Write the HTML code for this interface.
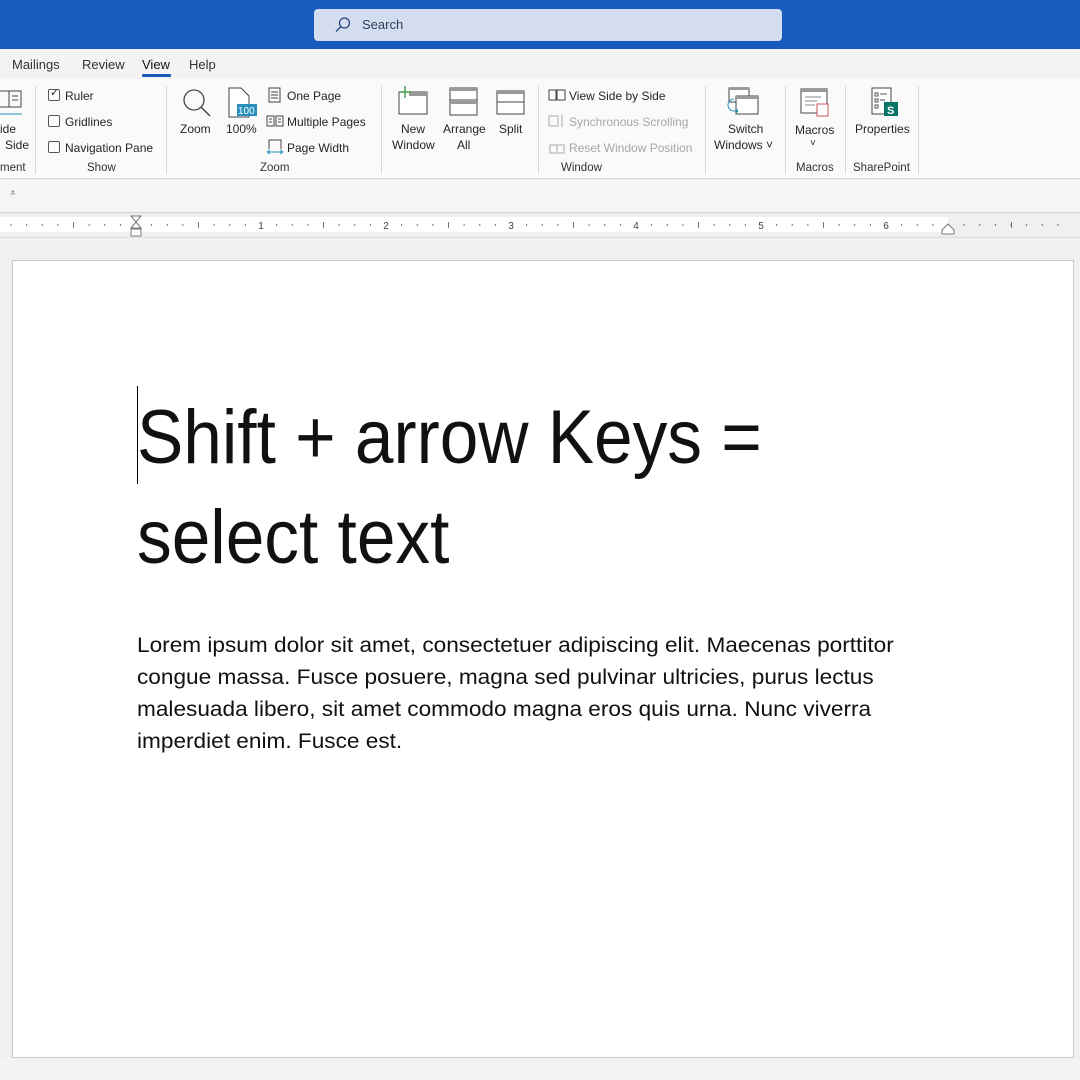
<!DOCTYPE html>
<html><head><meta charset="utf-8"><style>
*{margin:0;padding:0;box-sizing:border-box}
body{width:1080px;height:1080px;overflow:hidden;background:#f0f0f0;font-family:"Liberation Sans",sans-serif;position:relative;color:#222}
.a{position:absolute;white-space:nowrap}
.s{font-size:12px;color:#262626}
.g{color:#a6a6a6}
.cb{position:absolute;width:12px;height:12px;border:1px solid #555;border-radius:2px;background:#fff}
.sep{position:absolute;top:86px;width:1px;height:88px;background:#d8d8d8}
.lbl{font-size:11.5px;color:#333}
</style></head><body>
<div class="a" style="left:0;top:0;width:1080px;height:49px;background:#185abd"></div>
<div class="a" style="left:314px;top:9px;width:468px;height:32px;background:#d3ddef;border-radius:4px"></div>
<svg class="a" style="left:334px;top:16px" width="18" height="18" viewBox="0 0 18 18"><circle cx="10.5" cy="7" r="5" fill="none" stroke="#2b4a7f" stroke-width="1.3"/><line x1="7" y1="10.5" x2="2" y2="15.5" stroke="#2b4a7f" stroke-width="1.4"/></svg>
<div class="a" style="left:362px;top:17px;font-size:13px;color:#2b3e5c">Search</div>
<div class="a" style="left:0;top:49px;width:1080px;height:30px;background:#f3f3f3"></div>
<div class="a" style="left:12px;top:57px;font-size:13px;color:#333">Mailings</div>
<div class="a" style="left:82px;top:57px;font-size:13px;color:#333">Review</div>
<div class="a" style="left:142px;top:57px;font-size:13px;color:#111">View</div>
<div class="a" style="left:142px;top:74px;width:29px;height:3px;background:#185abd;border-radius:1px"></div>
<div class="a" style="left:189px;top:57px;font-size:13px;color:#333">Help</div>
<div class="a" style="left:0;top:79px;width:1080px;height:100px;background:#fafafa;border-bottom:1px solid #dadada"></div>
<svg class="a" style="left:0;top:90px" width="24" height="30"><rect x="-2" y="1" width="11" height="16" fill="none" stroke="#444"/><rect x="9" y="1" width="12" height="16" fill="none" stroke="#444"/><line x1="12" y1="6" x2="18" y2="6" stroke="#444"/><line x1="12" y1="10" x2="18" y2="10" stroke="#444"/><line x1="0" y1="24" x2="22" y2="24" stroke="#2a8fbd"/></svg>
<div class="a s" style="left:0;top:122px">ide</div>
<div class="a s" style="left:5px;top:138px">Side</div>
<div class="a lbl" style="left:0;top:162px">ment</div>
<div class="sep" style="left:35px"></div>
<div class="cb" style="left:48px;top:89px"></div><div class="a" style="left:50px;top:86px;font-size:11px">✓</div>
<div class="a s" style="left:65px;top:89px">Ruler</div>
<div class="cb" style="left:48px;top:115px"></div><div class="a s" style="left:65px;top:115px">Gridlines</div>
<div class="cb" style="left:48px;top:141px"></div><div class="a s" style="left:65px;top:141px">Navigation Pane</div>
<div class="a lbl" style="left:87px;top:162px">Show</div>
<div class="sep" style="left:166px"></div>
<svg class="a" style="left:180px;top:87px" width="32" height="32"><circle cx="14" cy="13" r="10" fill="none" stroke="#444" stroke-width="1.3"/><line x1="21" y1="20" x2="30" y2="29" stroke="#444" stroke-width="1.5"/></svg>
<div class="a s" style="left:180px;top:122px">Zoom</div>
<svg class="a" style="left:228px;top:87px" width="30" height="32"><path d="M1 1H13L21 9V30H1Z" fill="#fff" stroke="#444"/><rect x="9" y="17" width="20" height="12" fill="#2a8fbd"/><text x="10" y="27" font-size="10" fill="#fff" font-family="Liberation Sans">100</text></svg>
<div class="a s" style="left:226px;top:122px">100%</div>
<svg class="a" style="left:268px;top:87px" width="14" height="16"><rect x="1" y="1" width="11" height="14" fill="none" stroke="#444"/><path d="M3 5H10M3 8H10M3 11H10" stroke="#444"/></svg>
<div class="a s" style="left:287px;top:89px">One Page</div>
<svg class="a" style="left:266px;top:115px" width="18" height="12"><rect x="1" y="1" width="7" height="10" fill="none" stroke="#444"/><rect x="10" y="1" width="7" height="10" fill="none" stroke="#444"/><path d="M3 4H6M3 7H6M12 4H15M12 7H15" stroke="#444"/></svg>
<div class="a s" style="left:287px;top:115px">Multiple Pages</div>
<svg class="a" style="left:266px;top:139px" width="18" height="16"><path d="M3 10V1H15V10" fill="none" stroke="#444"/><path d="M1 13H17M1 13l3-2M1 13l3 2M17 13l-3-2M17 13l-3 2" stroke="#2a8fbd" fill="none"/></svg>
<div class="a s" style="left:287px;top:141px">Page Width</div>
<div class="a lbl" style="left:260px;top:162px">Zoom</div>
<div class="sep" style="left:381px"></div>
<svg class="a" style="left:397px;top:86px" width="32" height="30"><rect x="2" y="6" width="28" height="22" fill="#fff" stroke="#444"/><rect x="12" y="6" width="18" height="4" fill="#999"/><path d="M8 0V12M2 6H14" stroke="#3c9a4c" stroke-width="1.4"/></svg>
<div class="a s" style="left:401px;top:122px">New</div><div class="a s" style="left:392px;top:138px">Window</div>
<svg class="a" style="left:449px;top:87px" width="30" height="30"><rect x="1" y="1" width="27" height="27" fill="#fff" stroke="#444"/><rect x="1" y="1" width="27" height="3" fill="#999"/><rect x="1" y="14" width="27" height="3" fill="#999"/><line x1="1" y1="13" x2="28" y2="13" stroke="#444"/></svg>
<div class="a s" style="left:443px;top:122px">Arrange</div><div class="a s" style="left:457px;top:138px">All</div>
<svg class="a" style="left:496px;top:90px" width="30" height="26"><rect x="1" y="1" width="27" height="23" fill="#fff" stroke="#444"/><rect x="1" y="1" width="27" height="3" fill="#999"/><line x1="1" y1="12" x2="28" y2="12" stroke="#444"/></svg>
<div class="a s" style="left:499px;top:122px">Split</div>
<div class="sep" style="left:538px"></div>
<svg class="a" style="left:548px;top:89px" width="18" height="12"><rect x="1" y="1" width="7" height="10" fill="none" stroke="#444"/><rect x="9" y="1" width="8" height="10" fill="none" stroke="#444"/></svg>
<div class="a s" style="left:569px;top:89px">View Side by Side</div>
<svg class="a" style="left:548px;top:114px" width="18" height="14"><rect x="1" y="2" width="9" height="10" fill="none" stroke="#aaa"/><path d="M14 1V13" stroke="#aaa"/></svg>
<div class="a s g" style="left:569px;top:115px">Synchronous Scrolling</div>
<svg class="a" style="left:548px;top:140px" width="18" height="14"><rect x="2" y="5" width="7" height="8" fill="none" stroke="#aaa"/><rect x="9" y="5" width="7" height="8" fill="none" stroke="#aaa"/></svg>
<div class="a s g" style="left:569px;top:141px">Reset Window Position</div>
<div class="a lbl" style="left:561px;top:162px">Window</div>
<div class="sep" style="left:705px"></div>
<svg class="a" style="left:726px;top:87px" width="34" height="32"><rect x="3" y="1" width="20" height="14" fill="#fff" stroke="#444"/><rect x="3" y="1" width="20" height="2" fill="#999"/><rect x="10" y="9" width="22" height="18" fill="#fff" stroke="#444"/><rect x="10" y="9" width="22" height="3" fill="#999"/><path d="M8 12a5 5 0 0 0 0 12l4 0M12 24l-2-2M12 24l-2 2" stroke="#2a8fbd" fill="none"/></svg>
<div class="a s" style="left:728px;top:122px">Switch</div><div class="a s" style="left:714px;top:138px">Windows ˅</div>
<div class="sep" style="left:785px"></div>
<svg class="a" style="left:799px;top:87px" width="32" height="32"><rect x="2" y="2" width="26" height="24" fill="#fff" stroke="#444"/><rect x="2" y="2" width="26" height="3" fill="#999"/><path d="M6 10H22M6 14H18M6 18H16" stroke="#888"/><rect x="18" y="17" width="11" height="12" fill="#fff" stroke="#c55"/></svg>
<div class="a s" style="left:795px;top:123px">Macros</div><div class="a" style="left:810px;top:138px;font-size:10px">˅</div>
<div class="a lbl" style="left:796px;top:162px">Macros</div>
<div class="sep" style="left:845px"></div>
<svg class="a" style="left:870px;top:87px" width="30" height="32"><rect x="2" y="1" width="19" height="26" fill="#fff" stroke="#444"/><path d="M5 6h3v3h-3zM5 12h3v3h-3zM5 18h3v3h-3zM10 7H17M10 13H15" stroke="#555" fill="none"/><rect x="14" y="15" width="14" height="14" fill="#077568"/><text x="17" y="27" font-size="11" font-weight="bold" fill="#fff" font-family="Liberation Sans">S</text></svg>
<div class="a s" style="left:855px;top:122px">Properties</div>
<div class="a lbl" style="left:853px;top:162px">SharePoint</div>
<div class="sep" style="left:918px"></div>
<div class="a" style="left:0;top:180px;width:1080px;height:33px;background:#f5f5f5;border-bottom:1px solid #d4d4d4"></div>
<div class="a" style="left:10px;top:188px;font-size:10px;color:#444">⩡</div>
<div class="a" style="left:0;top:214px;width:1080px;height:24px;background:#f0f0f0;border-bottom:1px solid #dcdcdc"></div>
<div class="a" style="left:0;top:217px;width:948px;height:15px;background:#fff"></div>
<svg class="a" style="left:0;top:214px" width="1080" height="24">
<defs><pattern id="p" x="10.5" y="0" width="15.625" height="24" patternUnits="userSpaceOnUse"><rect x="0" y="10" width="1" height="2" fill="#777"/></pattern></defs>
<rect x="0" y="0" width="1060" height="24" fill="url(#p)"/>
<g fill="#777"><rect x="73" y="8" width="1" height="6"/><rect x="198" y="8" width="1" height="6"/><rect x="323" y="8" width="1" height="6"/><rect x="448" y="8" width="1" height="6"/><rect x="573" y="8" width="1" height="6"/><rect x="698" y="8" width="1" height="6"/><rect x="823" y="8" width="1" height="6"/><rect x="1011" y="8" width="1" height="6"/></g>
<g font-size="10" fill="#444" font-family="Liberation Sans" text-anchor="middle"><rect x="255" y="4" width="12" height="14" fill="#fff"/><text x="261" y="15">1</text><rect x="380" y="4" width="12" height="14" fill="#fff"/><text x="386" y="15">2</text><rect x="505" y="4" width="12" height="14" fill="#fff"/><text x="511" y="15">3</text><rect x="630" y="4" width="12" height="14" fill="#fff"/><text x="636" y="15">4</text><rect x="755" y="4" width="12" height="14" fill="#fff"/><text x="761" y="15">5</text><rect x="880" y="4" width="12" height="14" fill="#fff"/><text x="886" y="15">6</text></g>
<path d="M131 2H141L136 8L141 14H131L136 8Z" fill="#fff" stroke="#777"/><rect x="131" y="15" width="10" height="7" fill="#fff" stroke="#777"/>
<path d="M942 16L948 10L954 16V20H942Z" fill="#fff" stroke="#777"/>
</svg>
<div class="a" style="left:12px;top:260px;width:1062px;height:798px;background:#fff;border:1px solid #c8c8c8"></div>
<div class="a" style="left:0;top:1058px;width:1080px;height:22px;background:#f3f3f3"></div>
<div class="a" style="left:137px;top:386px;width:1px;height:98px;background:#000"></div>
<div class="a" style="left:137px;top:388px;font-size:76px;line-height:100px;color:#111;transform:scaleX(0.913);transform-origin:left">Shift + arrow Keys =</div>
<div class="a" style="left:137px;top:488px;font-size:76px;line-height:100px;color:#111;transform:scaleX(0.913);transform-origin:left">select text</div>
<div style="position:absolute;left:137px;top:630px;font-size:21px;line-height:32px;color:#111;transform:scaleX(1.077);transform-origin:left;white-space:nowrap">Lorem ipsum dolor sit amet, consectetuer adipiscing elit. Maecenas porttitor<br>congue massa. Fusce posuere, magna sed pulvinar ultricies, purus lectus<br>malesuada libero, sit amet commodo magna eros quis urna. Nunc viverra<br>imperdiet enim. Fusce est.</div>
</body></html>
